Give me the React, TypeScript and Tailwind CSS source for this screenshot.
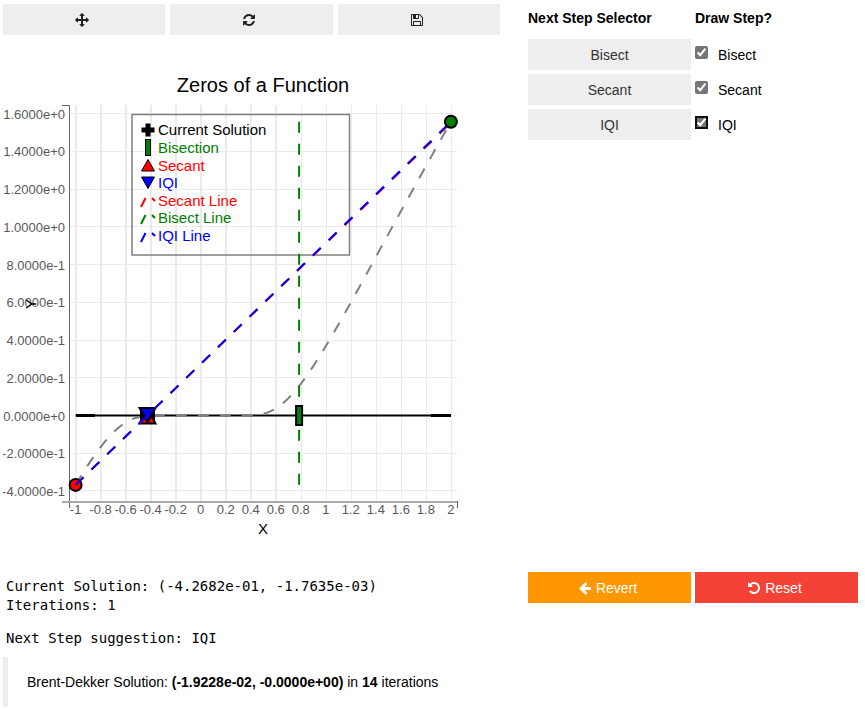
import React, { useState } from "react";

const ICONS = {
  move: "M1792 896q0 26-19 45l-256 256q-19 19-45 19t-45-19-19-45v-128h-384v384h128q26 0 45 19t19 45-19 45l-256 256q-19 19-45 19t-45-19l-256-256q-19-19-19-45t19-45 45-19h128v-384h-384v128q0 26-19 45t-45 19-45-19l-256-256q-19-19-19-45t19-45l256-256q19-19 45-19t45 19 19 45v128h384v-384h-128q-26 0-45-19t-19-45 19-45l256-256q19-19 45-19t45 19l256 256q19 19 19 45t-19 45-45 19h-128v384h384v-128q0-26 19-45t45-19 45 19l256 256q19 19 19 45z",
  refresh: "M1639 1056q0 5-1 7-64 268-268 434.5t-478 166.5q-146 0-282.5-55t-243.5-157l-129 129q-19 19-45 19t-45-19-19-45v-448q0-26 19-45t45-19h448q26 0 45 19t19 45-19 45l-137 137q71 66 161 102t187 36q134 0 250-65t186-179q11-17 53-117 8-23 30-23h192q13 0 22.5 9.5t9.5 22.5zm25-800v448q0 26-19 45t-45 19h-448q-26 0-45-19t-19-45 19-45l138-138q-148-137-349-137-134 0-250 65t-186 179q-11 17-53 117-8 23-30 23h-199q-13 0-22.5-9.5t-9.5-22.5v-7q65-268 270-434.5t480-166.5q146 0 284 55.5t245 156.5l130-129q19-19 45-19t45 19 19 45z",
  save: "M512 1536h768v-384h-768v384zm896 0h128v-896q0-14-10-38.5t-20-34.5l-281-281q-10-10-34-20t-39-10v416q0 40-28 68t-68 28h-576q-40 0-68-28t-28-68v-416h-128v1280h128v-416q0-40 28-68t68-28h832q40 0 68 28t28 68v416zm-384-928v-320q0-13-9.5-22.5t-22.5-9.5h-192q-13 0-22.5 9.5t-9.5 22.5v320q0 13 9.5 22.5t22.5 9.5h192q13 0 22.5-9.5t9.5-22.5zm640 32v928q0 40-28 68t-68 28h-1344q-40 0-68-28t-28-68v-1344q0-40 28-68t68-28h928q40 0 88 20t76 48l280 280q28 28 48 76t20 88z",
  left: "M1664 896v128q0 53-32.5 90.5t-84.5 37.5h-704l293 294q38 36 38 90t-38 90l-75 76q-37 37-90 37-52 0-91-37l-651-652q-37-37-37-90 0-52 37-91l651-650q38-38 91-38 52 0 90 38l75 74q38 38 38 91t-38 91l-293 293h704q52 0 84.5 37.5t32.5 90.5z",
  undo: "M1664 896q0 156-61 298t-164 245-245 164-298 61q-172 0-327-72.5t-264-204.5q-7-10-6.5-22.5t8.5-20.5l137-138q10-9 25-9 16 2 23 12 73 95 179 147t225 52q104 0 198.5-40.5t163.5-109.5 109.5-163.5 40.5-198.5-40.5-198.5-109.5-163.5-163.5-109.5-198.5-40.5q-98 0-188 35.5t-160 101.5l137 138q31 30 14 69-17 40-59 40h-448q-26 0-45-19t-19-45v-448q0-42 40-59 39-17 69 14l130 129q107-101 244.5-156.5t284.5-55.5q156 0 298 61t245 164 164 245 61 298z",
};

function Icon({ name }: { name: keyof typeof ICONS }) {
  return (
    <svg viewBox="0 0 1792 1792" className="size-[14px]" fill="currentColor" aria-hidden="true">
      <path d={ICONS[name]} />
    </svg>
  );
}

const f = (x: number) => (x === 0 ? 0 : x * Math.exp(-1 / (x * x)));
const px = (x: number) => 200.7 + x * 125.1;
const py = (y: number) => 415.5 - y * 188.6;

const A = -1;
const B = 2;
const SOLUTION = -0.42682;
const MIDPOINT = (B + SOLUTION) / 2;

const curve = Array.from({ length: 151 }, (_, i) => {
  const x = A + (i * (B - A)) / 150;
  return `${px(x).toFixed(2)},${py(f(x)).toFixed(2)}`;
}).join(" ");

const xTicks = Array.from({ length: 16 }, (_, i) => Math.round(-10 + 2 * i) / 10);
const yTicks = Array.from({ length: 11 }, (_, i) => (-4 + 2 * i) / 10);

const legendLines = [
  { label: "Secant Line", color: "red", y: 201 },
  { label: "Bisect Line", color: "green", y: 218 },
  { label: "IQI Line", color: "blue", y: 236 },
];
const legendLabels = [
  { label: "Current Solution", color: "black", y: 130 },
  { label: "Bisection", color: "green", y: 148 },
  { label: "Secant", color: "red", y: 166 },
  { label: "IQI", color: "blue", y: 183 },
  ...legendLines,
];

function Plus({ x, y }: { x: number; y: number }) {
  return <path d="M-2.5-6.5h5v4h4v5h-4v4h-5v-4h-4v-5h4z" transform={`translate(${x} ${y})`} />;
}
function Bar({ x, y }: { x: number; y: number }) {
  return <rect x={x - 3} y={y - 9} width="6" height="19" fill="green" stroke="black" strokeWidth="2" />;
}
function Up({ x, y }: { x: number; y: number }) {
  return <path d="M0-6.5L6.5 5h-13z" transform={`translate(${x} ${y})`} fill="red" stroke="black" />;
}
function Down({ x, y }: { x: number; y: number }) {
  return <path d="M0 6.5L6.5-5h-13z" transform={`translate(${x} ${y})`} fill="blue" stroke="black" />;
}

function Chart() {
  return (
    <svg viewBox="3 40 497 500" className="block w-full" role="img" aria-label="Zeros of a Function">
      <text x="263" y="92" textAnchor="middle" fontSize="20">Zeros of a Function</text>

      <g stroke="#ebebeb">
        {xTicks.map((t) => (
          <path key={t} d={`M${Math.round(px(t)) + (t > 0.7 ? 0.5 : 0)} 105V501`} strokeWidth={t > 0.7 ? 1 : 2} />
        ))}
        {yTicks.map((t) => (
          <path key={t} d={`M70 ${Math.floor(py(t)) + 0.5}H457`} />
        ))}
      </g>
      <g fill="none">
        <path d="M62 105.5H69.5V508" stroke="#666" strokeWidth="1" />
        <path d="M62 502H457" stroke="#aaa" strokeWidth="2" />
        <path d="M457.5 501V508" stroke="#666" />
      </g>

      <g fill="#595959" fontSize="13">
        {yTicks.map((t) => (
          <text key={t} x="65" y={py(t) + 5} textAnchor="end">
            {t.toExponential(4)}
          </text>
        ))}
        {xTicks.map((t) => (
          <text key={t} x={px(t)} y="514" textAnchor="middle">{t}</text>
        ))}
      </g>
      <text x="263" y="534" textAnchor="middle" fontSize="15">X</text>
      <text transform="translate(36 304) rotate(-90)" textAnchor="middle" fontSize="15">Y</text>

      <rect x="132" y="114.5" width="217.5" height="140.5" fill="none" stroke="#808080" strokeWidth="1.5" />
      <g fontSize="15">
        {legendLabels.map((l) => (
          <text key={l.label} x="158" y={l.y + 5} fill={l.color}>{l.label}</text>
        ))}
      </g>
      <Plus x={148} y={130} />
      <rect x="145.5" y="139.5" width="5" height="16" fill="green" stroke="black" />
      <Up x={148} y={166} />
      <Down x={148} y={182} />
      {legendLines.map((l) => (
        <path key={l.label} d={`M141 ${l.y + 6}L145.500 ${l.y - 3}M152 ${l.y - 3}L155 ${l.y}`} stroke={l.color} strokeWidth="2" />
      ))}

      <path d={`M${px(A)} 415.500H${px(B)}`} stroke="black" strokeWidth="2" />
      <path d="M76 415.500H95M431 415.500H451" stroke="black" strokeWidth="3" />
      <polyline points={curve} fill="none" stroke="gray" strokeWidth="2" strokeDasharray="11 11" />
      <circle cx={px(A)} cy={py(f(A))} r="6" fill="red" stroke="black" strokeWidth="2" />

      <rect x="140" y="408" width="15" height="15" />
      <path d="M147.5 409L155.5 423.500H139.500Z" fill="red" stroke="black" strokeWidth="2" />
      <path d="M147.5 422L155.5 408H139.500Z" fill="blue" stroke="black" strokeWidth="2" />
      <g strokeWidth="2" strokeDasharray="11 11">
        <path d={`M${px(A)} ${py(f(A))}L${px(B)} ${py(f(B)) + 1}`} stroke="red" />
        <path d={`M${px(MIDPOINT)} ${py(f(B))}V${py(f(A))}`} stroke="green" />
        <path d={`M${px(A)} ${py(f(A))}L${px(B)} ${py(f(B))}`} stroke="blue" />
      </g>
      <Bar x={px(MIDPOINT)} y={415} />
      <circle cx={px(B)} cy={py(f(B))} r="6" fill="green" stroke="black" strokeWidth="2" />
    </svg>
  );
}

const grayButton =
  "flex h-[31px] w-full items-center justify-center bg-[#eee] text-[#333] hover:bg-[#ddd]";
const toolButton =
  "flex h-[31px] w-full items-center justify-center bg-[#eee] pr-1 text-[#222] hover:bg-[#ddd]";

export default function App() {
  const steps = ["Bisect", "Secant", "IQI"];
  const [drawn, setDrawn] = useState<Record<string, boolean>>({ Bisect: true, Secant: true, IQI: true });

  return (
    <main className="grid grid-cols-[497fr_330fr] gap-x-7 bg-white pt-1 pr-[7px] pl-[3px] font-['Liberation_Sans',Arial,sans-serif] text-[14px] leading-5 text-black">
      <section>
        <div className="grid grid-cols-3 gap-[5px]">
          <button aria-label="Pan" className={toolButton}><Icon name="move" /></button>
          <button aria-label="Refresh" className={toolButton}><Icon name="refresh" /></button>
          <button aria-label="Save" className={toolButton}><Icon name="save" /></button>
        </div>
        <div className="mt-[5px]"><Chart /></div>
      </section>

      <section className="grid auto-rows-min grid-cols-2 gap-1">
        <h2 className="flex h-[31px] items-center pb-1 font-bold">Next Step Selector</h2>
        <h2 className="flex h-[31px] items-center pb-1 font-bold">Draw Step?</h2>
        {steps.map((s) => (
          <React.Fragment key={s}>
            <button className={grayButton}>{s}</button>
            <label className="flex h-[31px] items-center gap-[10px]">
              <input
                type="checkbox"
                checked={drawn[s]}
                onChange={(e) => setDrawn({ ...drawn, [s]: e.target.checked })}
                className={
                  s === "IQI"
                    ? "mb-1 size-[13px] rounded-[5px] accent-[#767676] outline-2 -outline-offset-2 outline-[#101010]"
                    : "mb-1 size-[13px] accent-[#767676]"
                }
              />
              {s}
            </label>
          </React.Fragment>
        ))}
      </section>

      <section className="mt-8">
        <div className="px-[3px] pt-[5px] font-['DejaVu_Sans_Mono','Liberation_Mono',monospace] leading-[19px]">
          <p>Current Solution: (-4.2682e-01, -1.7635e-03)</p>
          <p>Iterations: 1</p>
          <p className="mt-[14px]">Next Step suggestion: IQI</p>
        </div>
        <div className="mt-[9px] border-l-[5px] border-[#eee] px-[19px] py-[15px]">
          Brent-Dekker Solution: <b>(-1.9228e-02, -0.0000e+00)</b> in <b>14</b> iterations
        </div>
      </section>

      <section className="mt-8 grid auto-rows-min grid-cols-2 gap-x-1">
        <button className="flex h-[31px] items-center justify-center gap-1 bg-[#ff9800] pr-1 text-white">
          <Icon name="left" />
          Revert
        </button>
        <button className="flex h-[31px] items-center justify-center gap-1 bg-[#f44336] pr-1 text-white">
          <Icon name="undo" />
          Reset
        </button>
      </section>
    </main>
  );
}
